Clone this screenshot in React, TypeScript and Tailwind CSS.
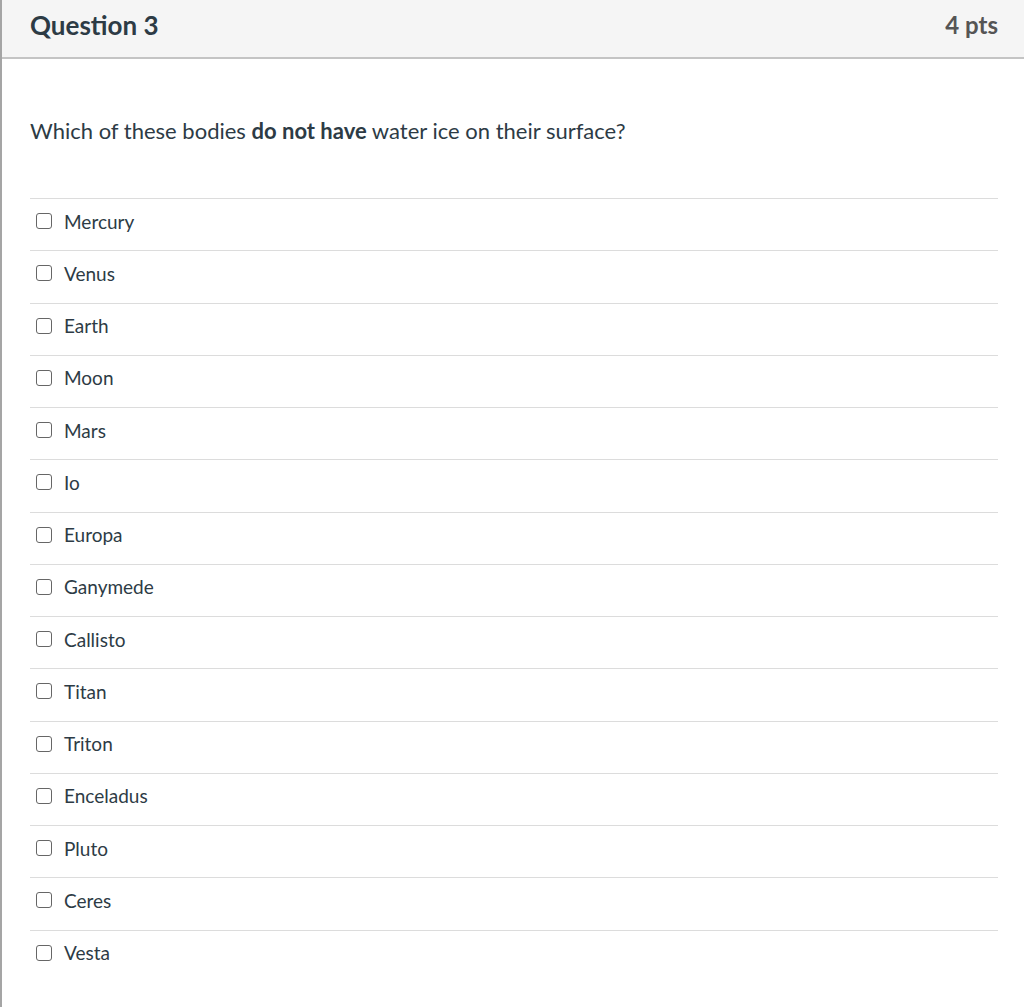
import React from "react";

const answers = [
  "Mercury",
  "Venus",
  "Earth",
  "Moon",
  "Mars",
  "Io",
  "Europa",
  "Ganymede",
  "Callisto",
  "Titan",
  "Triton",
  "Enceladus",
  "Pluto",
  "Ceres",
  "Vesta",
];

export default function App() {
  return (
    <div
      className="w-[1024px] h-[1007px] bg-white border-l-2 border-[#a5a5a5] text-[#2d3b45] overflow-hidden"
      style={{ fontFamily: "Lato, 'Liberation Sans', sans-serif" }}
    >
      <div className="h-[59px] bg-[#f5f5f5] border-b-2 border-[#c4c4c4] flex items-center justify-between pl-[28px] pr-[26px]">
        <div className="text-[26px] font-bold leading-none pb-[8px]">Question 3</div>
        <div className="text-[24px] font-bold leading-none text-[#555] pb-[8px]">4 pts</div>
      </div>
      <div className="pl-[28px] pr-[26px]">
        <div className="pt-[59px] pb-[54px] text-[22px] leading-[26px]">
          Which of these bodies <span className="font-bold">do not have</span> water ice on their surface?
        </div>
        <div>
          {answers.map((a) => (
            <div
              key={a}
              className="h-[52.25px] border-t border-[#dcdcdc] flex items-center pl-[6px] pb-[7px]"
            >
              <span className="w-[16px] h-[16px] border-[1.5px] border-[#666] rounded-[3px] bg-white mr-[12px]" />
              <span className="text-[19px] leading-none">{a}</span>
            </div>
          ))}
        </div>
      </div>
    </div>
  );
}
